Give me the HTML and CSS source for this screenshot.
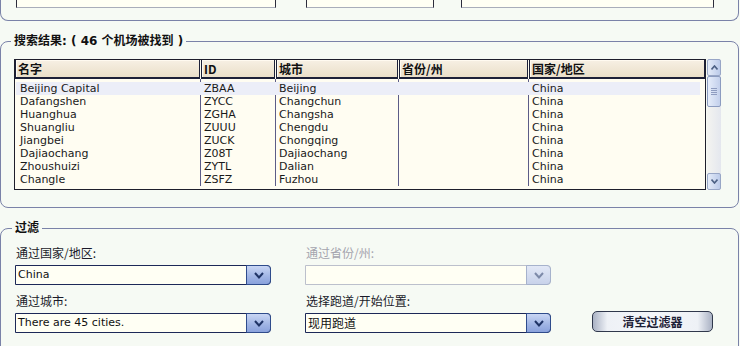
FILE: index.html
```html
<!DOCTYPE html>
<html lang="zh-CN">
<head>
    <meta charset="UTF-8">
    <meta name="viewport" content="width=device-width, initial-scale=1.0">
    <title>机场搜索</title>
    <link rel="stylesheet" href="styles.css">
</head>
<body>
    <!-- Search panel (scrolled, only its bottom shows) -->
    <div class="top-panel">
        <div class="top-box box-name"></div>
        <div class="top-box box-id"></div>
        <div class="top-box box-city"></div>
    </div>

    <!-- Results -->
    <fieldset class="group results">
        <legend>搜索结果: ( 46 个机场被找到 )</legend>
        <div class="list-wrap">
            <div class="list">
                <div class="list-head">
                    <div class="hcell c1">名字</div>
                    <div class="hcell c2">ID</div>
                    <div class="hcell c3">城市</div>
                    <div class="hcell c4">省份/州</div>
                    <div class="hcell c5">国家/地区</div>
                </div>
                <div class="list-body">
                    <div class="row spacer"><span class="c1"></span><span class="c2"></span><span class="c3"></span><span class="c4"></span><span class="c5"></span></div>
                    <div class="row selected"><span class="c1">Beijing Capital</span><span class="c2">ZBAA</span><span class="c3">Beijing</span><span class="c4"></span><span class="c5">China</span></div>
                    <div class="row"><span class="c1">Dafangshen</span><span class="c2">ZYCC</span><span class="c3">Changchun</span><span class="c4"></span><span class="c5">China</span></div>
                    <div class="row"><span class="c1">Huanghua</span><span class="c2">ZGHA</span><span class="c3">Changsha</span><span class="c4"></span><span class="c5">China</span></div>
                    <div class="row"><span class="c1">Shuangliu</span><span class="c2">ZUUU</span><span class="c3">Chengdu</span><span class="c4"></span><span class="c5">China</span></div>
                    <div class="row"><span class="c1">Jiangbei</span><span class="c2">ZUCK</span><span class="c3">Chongqing</span><span class="c4"></span><span class="c5">China</span></div>
                    <div class="row"><span class="c1">Dajiaochang</span><span class="c2">Z08T</span><span class="c3">Dajiaochang</span><span class="c4"></span><span class="c5">China</span></div>
                    <div class="row"><span class="c1">Zhoushuizi</span><span class="c2">ZYTL</span><span class="c3">Dalian</span><span class="c4"></span><span class="c5">China</span></div>
                    <div class="row"><span class="c1">Changle</span><span class="c2">ZSFZ</span><span class="c3">Fuzhou</span><span class="c4"></span><span class="c5">China</span></div>
                </div>
            </div>
            <div class="scrollbar">
                <div class="sb-btn">
                    <svg width="7" height="5" viewBox="0 0 7 5"><path d="M0.5 4.5 L3.5 1 L6.5 4.5" fill="none" stroke="#4d6185" stroke-width="1.6"/></svg>
                </div>
                <div class="sb-thumb">
                    <span></span><span></span><span></span><span></span>
                </div>
                <div class="sb-track"></div>
                <div class="sb-btn">
                    <svg width="7" height="5" viewBox="0 0 7 5"><path d="M0.5 0.5 L3.5 4 L6.5 0.5" fill="none" stroke="#4d6185" stroke-width="1.6"/></svg>
                </div>
            </div>
        </div>
    </fieldset>

    <!-- Filters -->
    <fieldset class="group filter">
        <legend>过滤</legend>
        <div class="filter-grid">
            <div class="field">
                <div class="label">通过国家/地区:</div>
                <div class="select">
                    <span class="value">China</span>
                    <span class="drop"><svg width="10" height="7" viewBox="0 0 10 7"><path d="M1 1 L5 5.5 L9 1" fill="none" stroke="#1f3466" stroke-width="2"/></svg></span>
                </div>
            </div>
            <div class="field disabled">
                <div class="label">通过省份/州:</div>
                <div class="select">
                    <span class="value"></span>
                    <span class="drop"><svg width="10" height="7" viewBox="0 0 10 7"><path d="M1 1 L5 5.5 L9 1" fill="none" stroke="#7d8aa8" stroke-width="2"/></svg></span>
                </div>
            </div>
            <div></div>
            <div class="field">
                <div class="label">通过城市:</div>
                <div class="select">
                    <span class="value">There are 45 cities.</span>
                    <span class="drop"><svg width="10" height="7" viewBox="0 0 10 7"><path d="M1 1 L5 5.5 L9 1" fill="none" stroke="#1f3466" stroke-width="2"/></svg></span>
                </div>
            </div>
            <div class="field">
                <div class="label">选择跑道/开始位置:</div>
                <div class="select">
                    <span class="value cjk">现用跑道</span>
                    <span class="drop"><svg width="10" height="7" viewBox="0 0 10 7"><path d="M1 1 L5 5.5 L9 1" fill="none" stroke="#1f3466" stroke-width="2"/></svg></span>
                </div>
            </div>
            <button class="clear-btn">清空过滤器</button>
        </div>
    </fieldset>
</body>
</html>
```

FILE: styles.css
```css
body {
    margin: 0;
    background: #f6faf4;
    font-family: "DejaVu Sans", "Noto Sans CJK SC", sans-serif;
    font-size: 12px;
    color: #111;
}

/* top panel */
.top-panel {
    display: flex;
    height: 20px;
    margin-right: 1px;
    border: 1px solid #7a82a8;
    border-top: none;
    border-radius: 0 0 8px 8px;
}
.top-box {
    height: 7px;
    background: #fffff4;
    border: 1px solid #2c2c3c;
    border-top: none;
    border-bottom-color: #a9adba;
}
.box-name { width: 258px; margin-left: 15px; }
.box-id { width: 126px; margin-left: 30px; }
.box-city { width: 251px; margin-left: 27px; }

/* fieldsets */
.group {
    margin: 13px 1px 0 0;
    border: 1px solid #7a82a8;
    border-radius: 8px;
    min-width: 0;
}
.group legend {
    margin-left: -3px;
    padding: 0 3px;
    font-family: "DejaVu Sans", "Noto Sans CJK SC", sans-serif;
    font-weight: bold;
    font-size: 12px;
    line-height: 14px;
    color: #111;
}
.results {
    padding: 11px 17px 17px 13px;
}

/* list view */
.list-wrap {
    display: flex;
    gap: 1px;
}
.list {
    width: 690px;
    border: 1px solid #1e1e2c;
    background: #fffdf2;
}
.list-head {
    display: flex;
    gap: 1px;
}
.hcell {
    box-sizing: border-box;
    height: 19px;
    padding-left: 2px;
    border: 1px solid #1c2038;
    border-top: none;
    border-bottom-width: 2px;
    background: linear-gradient(#f7f0e4, #eadfc9);
    box-shadow: inset 1px 1px 0 #fffaf0;
    font-family: "Noto Sans CJK SC", sans-serif;
    font-weight: bold;
    font-size: 12px;
    line-height: 17px;
}
.hcell.c1 { width: 185px; }
.hcell.c2 { width: 74px; }
.hcell.c3 { width: 122px; }
.hcell.c4 { width: 129px; }
.hcell.c5 { width: 176px; }

.list-body {
    height: 110px;
    padding-left: 1px;
    font-size: 11px;
    line-height: 13px;
    color: #1a1a1a;
}
.row {
    display: flex;
    height: 13px;
    width: 684px;
}
.row.spacer { height: 3px; }
.row span {
    box-sizing: border-box;
    padding-left: 3px;
    white-space: nowrap;
    overflow: hidden;
    border-left: 1px solid #5c5c88;
}
.row .c1 { width: 184px; padding-left: 4px; border-left: none; }
.row .c2 { width: 75px; }
.row .c3 { width: 123px; }
.row .c4 { width: 130px; }
.row .c5 { width: 172px; }
.row.selected { background: #eceef8; }
.row.selected span { border-left-color: #eceef8; }

/* scrollbar */
.scrollbar {
    display: flex;
    flex-direction: column;
    width: 14px;
    background: linear-gradient(to right, #f4f4f0, #e4e7ee);
    border-radius: 2px;
}
.sb-btn {
    box-sizing: border-box;
    height: 17px;
    display: flex;
    align-items: center;
    justify-content: center;
    border: 1px solid #98a6c6;
    border-radius: 2px;
    background: linear-gradient(to right, #e4ebf8, #bccbea);
}
.sb-thumb {
    box-sizing: border-box;
    height: 31px;
    display: flex;
    flex-direction: column;
    align-items: center;
    justify-content: center;
    gap: 1px;
    border: 1px solid #8c9cc0;
    border-radius: 2px;
    background: linear-gradient(to right, #e6edfa, #c3d0ec);
}
.sb-thumb span {
    width: 6px;
    height: 1px;
    background: #8e9cc0;
}
.sb-track { flex: 1; }

/* filter */
.filter {
    padding: 10px 14px 30px 14px;
}
.filter-grid {
    display: grid;
    grid-template-columns: 256px 246px 121px;
    column-gap: 34px;
    row-gap: 8px;
}
.label {
    padding-left: 1px;
    height: 16px;
    margin-bottom: 4px;
    font-family: "Noto Sans CJK SC", sans-serif;
    font-size: 12px;
    line-height: 16px;
    color: #1a1a2a;
}
.select {
    box-sizing: border-box;
    display: flex;
    height: 20px;
    border: 1px solid #1c2858;
    border-radius: 0 4px 4px 0;
    background: #fffff4;
}
.select .value {
    flex: 1;
    padding-left: 2px;
    font-size: 11px;
    line-height: 18px;
    color: #111;
}
.select .value.cjk {
    font-family: "Noto Sans CJK SC", sans-serif;
    font-size: 12px;
}
.drop {
    box-sizing: border-box;
    width: 25px;
    margin: -1px -1px -1px 0;
    display: flex;
    align-items: center;
    justify-content: center;
    border: 1px solid #2f4c8c;
    border-radius: 0 4px 4px 0;
    background: linear-gradient(#c9d6f4, #9fb4e4 60%, #8aa2dc);
}
.disabled .label { color: #a4a4ae; }
.disabled .select { border-color: #bcc0cc; }
.disabled .drop {
    border-color: #a6b2cc;
    background: linear-gradient(#e2e8f6, #c8d2ea);
}
.clear-btn {
    align-self: end;
    margin: 0 0 1px 7px;
    width: 121px;
    height: 21px;
    padding: 0;
    border: 1px solid #30384c;
    border-radius: 5px;
    background: linear-gradient(to right, #aab2c4, #eef1f6 12%, #f4f6fa 50%, #eef1f6 88%, #aab2c4);
    font-family: "Noto Sans CJK SC", sans-serif;
    font-weight: bold;
    font-size: 12px;
    color: #1c2036;
}
```
